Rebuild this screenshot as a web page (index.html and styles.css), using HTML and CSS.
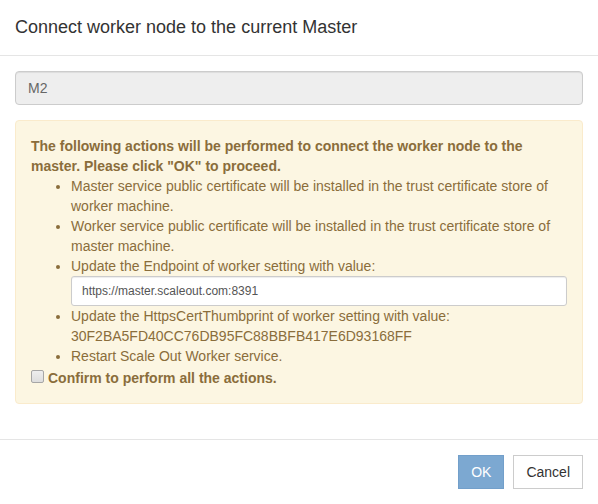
FILE: index.html
```html
<!DOCTYPE html>
<html lang="en">
<head>
<meta charset="utf-8">
<title>Connect worker node</title>
<link rel="stylesheet" href="styles.css">
</head>
<body>
<form class="modal">
  <header class="modal-header">
    <h1 class="modal-title">Connect worker node to the current Master</h1>
  </header>
  <main class="modal-body">
    <input class="form-control node-name" type="text" value="M2" aria-label="Worker node" disabled>
    <section class="alert">
      <strong>The following actions will be performed to connect the worker node to the master. Please click "OK" to proceed.</strong>
      <ul class="actions">
        <li>Master service public certificate will be installed in the trust certificate store of worker machine.</li>
        <li>Worker service public certificate will be installed in the trust certificate store of master machine.</li>
        <li><label for="endpoint">Update the Endpoint of worker setting with value:</label>
          <input class="form-control endpoint" id="endpoint" type="text" value="https://master.scaleout.com:8391"></li>
        <li>Update the HttpsCertThumbprint of worker setting with value: 30F2BA5FD40CC76DB95FC88BBFB417E6D93168FF</li>
        <li>Restart Scale Out Worker service.</li>
      </ul>
      <label class="confirm"><input class="confirm-box" type="checkbox"><strong>Confirm to perform all the actions.</strong></label>
    </section>
  </main>
  <footer class="modal-footer">
    <button class="btn btn-primary" type="submit" disabled>OK</button>
    <button class="btn btn-default" type="button">Cancel</button>
  </footer>
</form>
</body>
</html>
```
FILE: styles.css
```css
* {
  box-sizing: border-box;
}

body {
  margin: 0;
  background: #fff;
  color: #333;
  font: 14px/20px "Liberation Sans", Arial, sans-serif;
}

.modal-header {
  padding: 15px;
  border-bottom: 1px solid #e5e5e5;
}

.modal-title {
  margin: 0;
  font-size: 18px;
  line-height: 25px;
  font-weight: 400;
}

.modal-body {
  padding: 15px;
}

.form-control {
  display: block;
  width: 100%;
  border: 1px solid #ccc;
  border-radius: 4px;
  padding: 6px 12px;
  color: #555;
  background: #fff;
  font: inherit;
  box-shadow: inset 0 1px 1px rgba(0, 0, 0, 0.075);
}

.node-name {
  height: 34px;
  background: #eee;
  color: #666;
}

.endpoint {
  height: 30px;
  padding: 5px 10px;
  border-radius: 3px;
  font-size: 12px;
}

.alert {
  margin: 15px 0 20px;
  padding: 15px;
  border: 1px solid #faebcc;
  border-radius: 4px;
  background: #fcf6e2;
  color: #8a6d3b;
}

.actions {
  margin: 0;
  padding-left: 40px;
}

.confirm {
  display: flex;
  align-items: flex-start;
  gap: 4px;
  padding-top: 2px;
}

.confirm-box {
  appearance: none;
  width: 13px;
  height: 13px;
  margin: 2px 0 0;
  border: 1px solid #a6a6a6;
  border-radius: 2px;
  background: linear-gradient(#eee, #ddd);
}

.modal-footer {
  display: flex;
  justify-content: flex-end;
  gap: 9px;
  padding: 15px;
  border-top: 1px solid #e5e5e5;
}

.btn {
  padding: 6px 12px;
  border: 1px solid #ccc;
  font: inherit;
}

.btn-primary {
  border-color: #729fca;
  background: #7ca8d1;
  color: #fff;
}

.btn-default {
  background: #fff;
  color: #333;
}
```
